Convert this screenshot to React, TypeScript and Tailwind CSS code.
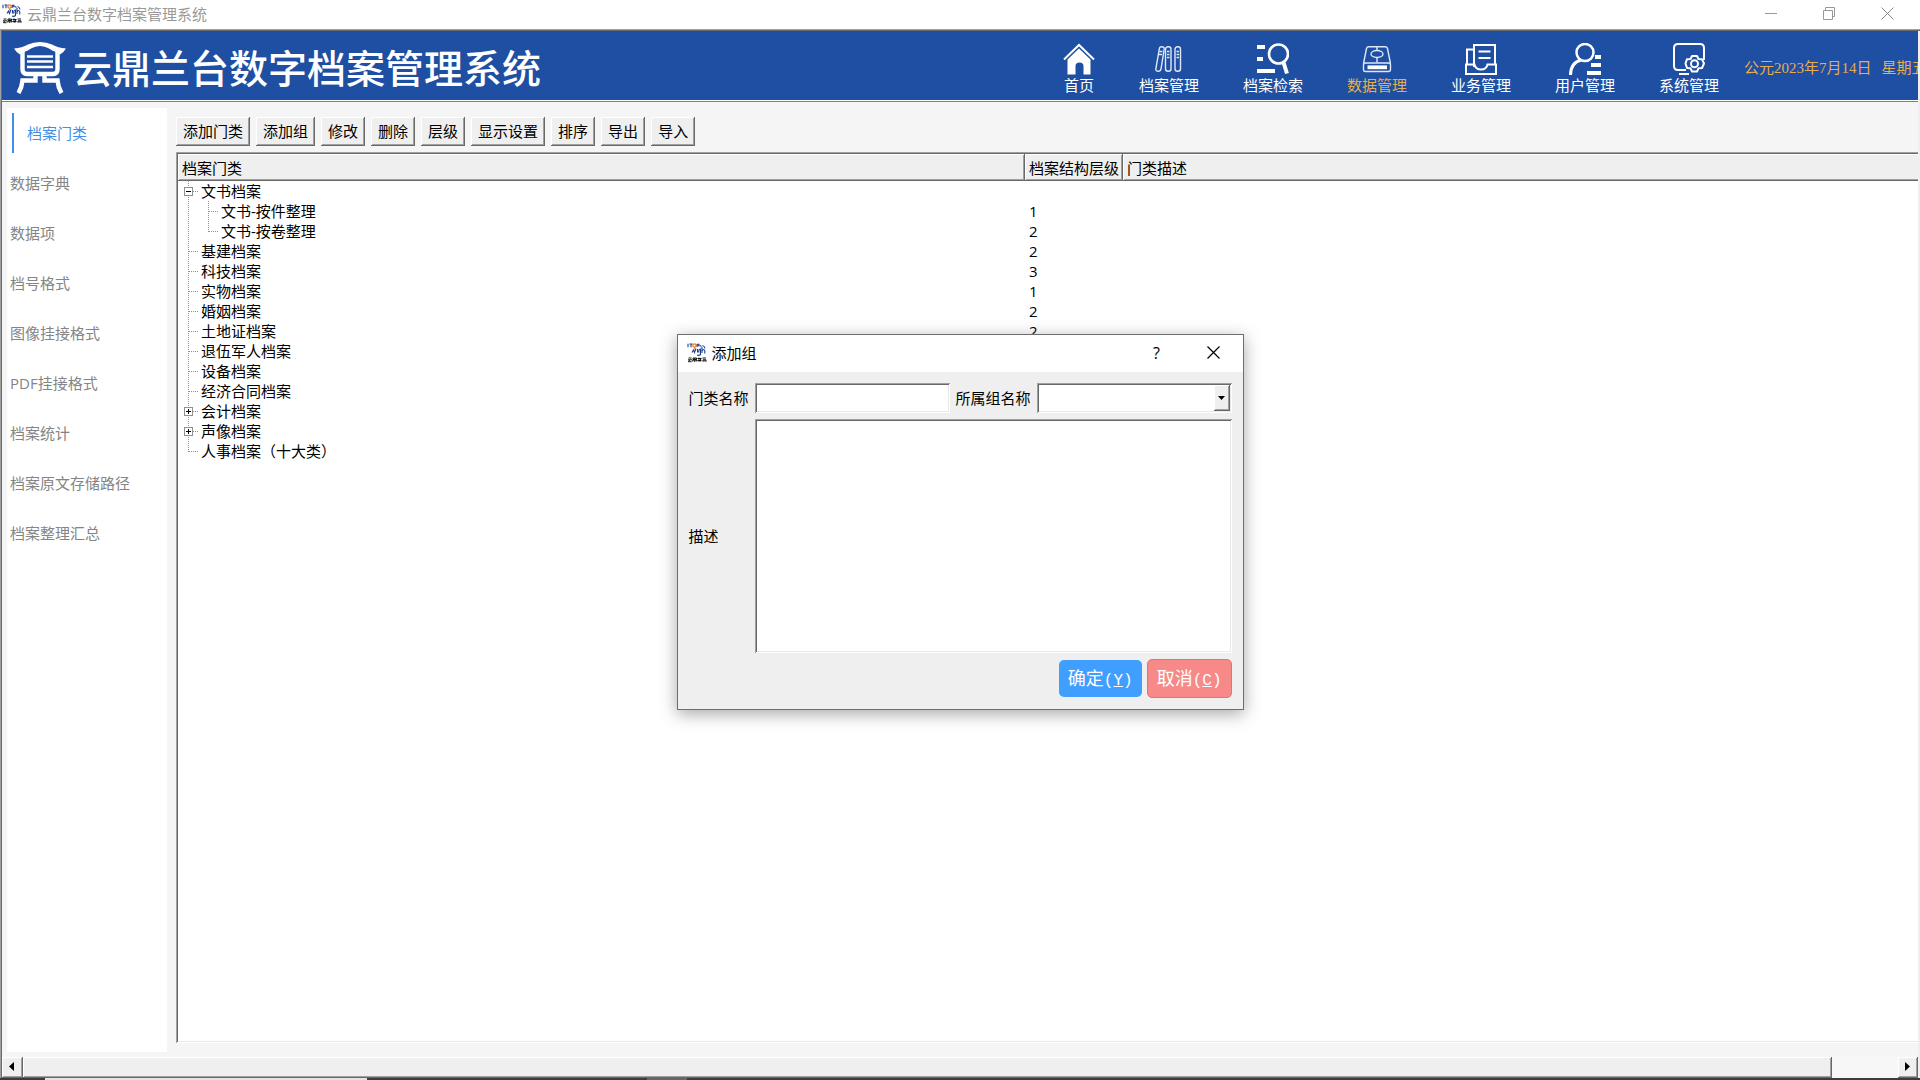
import React from 'react';

const SUNKEN = 'shadow-[inset_1px_1px_0_#a0a0a0,inset_-1px_-1px_0_#fff,inset_2px_2px_0_#696969,inset_-2px_-2px_0_#e9e9e9]';
const RAISED = 'shadow-[inset_-1px_-1px_0_#696969,inset_1px_1px_0_#fff,inset_-2px_-2px_0_#a0a0a0]';

interface TreeRow {
  name: string;
  level?: string;
  child?: boolean;
  last?: boolean;
  toggle?: 'plus' | 'minus';
}

const rows: TreeRow[] = [
  { name: '文书档案', toggle: 'minus' },
  { name: '文书-按件整理', level: '1', child: true },
  { name: '文书-按卷整理', level: '2', child: true, last: true },
  { name: '基建档案', level: '2' },
  { name: '科技档案', level: '3' },
  { name: '实物档案', level: '1' },
  { name: '婚姻档案', level: '2' },
  { name: '土地证档案', level: '2' },
  { name: '退伍军人档案' },
  { name: '设备档案' },
  { name: '经济合同档案' },
  { name: '会计档案', toggle: 'plus' },
  { name: '声像档案', toggle: 'plus' },
  { name: '人事档案（十大类）', last: true },
];

const sideItems = ['档案门类', '数据字典', '数据项', '档号格式', '图像挂接格式', 'PDF挂接格式', '档案统计', '档案原文存储路径', '档案整理汇总'];

const tools = ['添加门类', '添加组', '修改', '删除', '层级', '显示设置', '排序', '导出', '导入'];

const navItems = [
  { label: '首页', icon: <HomeIcon /> },
  { label: '档案管理', icon: <BooksIcon /> },
  { label: '档案检索', icon: <SearchIcon /> },
  { label: '数据管理', icon: <DriveIcon />, active: true },
  { label: '业务管理', icon: <InboxIcon /> },
  { label: '用户管理', icon: <UserIcon /> },
  { label: '系统管理', icon: <SystemIcon /> },
];

function AppMark() {
  return (
    <svg width="20" height="20" viewBox="0 0 20 20" aria-hidden="true">
      <g fill="none" stroke="#1d3f94" strokeWidth="1.1">
        <path d="M1 .8v3.500M2.500 1h3M4 1v3.300M10 1v3M10 1.200h2v1.500h-2M13 2.500l1.500 1" />
        <path d="M5 9.500l1.500-2.500 1 2.500 1.500-4M10.500 6v3.500M12 9.500q-1-3 1.500-3.500v5.500q-1.500 1.500-3.500.5M15 4v6M15.200 8q1.500-3 2.600 0v2.500M15.500 2.500q2 .5 2.500 3" />
      </g>
      <circle cx="7.500" cy="2.500" r="1.600" fill="none" stroke="#f07c28" strokeWidth="1.400" />
      <path d="M7.500 4.500v2" stroke="#f07c28" />
      <g fill="none" stroke="#111" strokeWidth="1">
        <path d="M1.500 15h3M1 16.800h4M2.500 17l-1 1.700h3" />
        <path d="M6 15h3.500v1.600H6zM5.800 18.500v-1.500h4v1.500M7.800 15v4" />
        <path d="M10.500 15.500h3.800M10.500 17.500h4M12 14.500v4M14 15l-1 3.700" />
        <path d="M15.500 15h3.500M16 16.800h3v2M16 16.800v2M16.500 17.800h2" />
      </g>
    </svg>
  );
}

function DingLogo() {
  return (
    <svg width="52" height="52" viewBox="0 0 52 52" fill="none" aria-hidden="true">
      <path d="M0 6.500Q8 6 14 2.500Q19 0 26 0Q33 0 38 2.500Q44 6 52 6.500Q50 10 46 12.500L42 10Q38 8.500 35 6.500Q31 4 26 4Q21 4 17 6.500Q14 8.500 10 10L6 12.500Q2 10 0 6.500Z" fill="#fff" />
      <g stroke="#fff" strokeWidth="4.400">
        <path d="M8.500 9V27Q8.500 32 13 32H39Q43.500 32 43.500 27V9" />
        <path d="M21.500 32V38.500H8.500Q8 45 4.500 51" />
        <path d="M30.500 32V38.500H43.500Q44 45 47.500 51" />
      </g>
      <path d="M13 14.500h26M13 19.500h26M13 25h26" stroke="#fff" strokeWidth="2.400" />
    </svg>
  );
}

function HomeIcon() {
  return (
    <svg width="32" height="32" viewBox="0 0 32 32" aria-hidden="true">
      <path d="M1 16.500L16 2L31 16.500" fill="none" stroke="#fff" strokeWidth="2" />
      <path d="M4.500 16.500L16 5.500L27.500 16.500V31.500H20.500V23Q20.500 19.500 16.500 19.500Q12.500 19.500 12.500 23V31.500H4.500Z" fill="#fff" />
    </svg>
  );
}

function BooksIcon() {
  return (
    <svg width="32" height="32" viewBox="0 0 32 32" fill="none" stroke="#dfe8f8" strokeWidth="1.400" aria-hidden="true">
      <path d="M6.500 5Q7 3.500 8.500 3.700L10.200 4Q11.500 4.300 11.200 6L8 26Q7.500 28.300 5.800 28.200L4 28Q2.500 27.500 2.800 26Z" />
      <rect x="12.500" y="3.700" width="5.500" height="24.500" rx="2.500" />
      <rect x="22" y="3.700" width="5.500" height="24.500" rx="2.500" />
      <path d="M6.500 8.500h3M6 11.500h3M14 8.500h2.500M14 11.500h2.500M14 14.500h2.500M23.500 8.500h2.500M23.500 11.500h2.500M23.500 14.500h2.500" />
    </svg>
  );
}

function SearchIcon() {
  return (
    <svg width="32" height="32" viewBox="0 0 32 32" fill="none" stroke="#fff" aria-hidden="true">
      <path d="M0 4h8M0 16h6M0 28h18" strokeWidth="4" />
      <circle cx="21.500" cy="11" r="9.500" strokeWidth="2.600" />
      <path d="M26.500 19.500L30 30.500" strokeWidth="4" />
    </svg>
  );
}

function DriveIcon() {
  return (
    <svg width="32" height="32" viewBox="0 0 32 32" fill="none" stroke="#dfe8f8" strokeWidth="1.400" aria-hidden="true">
      <path d="M2.500 20.500L5.500 5.500Q6 3.700 8 3.700H24Q26 3.700 26.500 5.500L29.500 20.500" />
      <rect x="2.500" y="20" width="27" height="8.500" rx="2" />
      <ellipse cx="16" cy="11" rx="6" ry="3.500" />
      <path d="M16 4v4M16 14.500v5" />
      <path d="M6.500 24.300h19.500" stroke="#fff" strokeWidth="3.800" />
    </svg>
  );
}

function InboxIcon() {
  return (
    <svg width="32" height="32" viewBox="0 0 32 32" fill="none" stroke="#fff" strokeWidth="2" aria-hidden="true">
      <path d="M9 24V2h21v19M9 6.500H2V21" />
      <path d="M1 21.500h8.500Q10.500 26.500 16 26.500Q21.500 26.500 22.500 21.500H31V31H1Z" />
      <path d="M13.500 8.500h12M13.500 15h12" />
    </svg>
  );
}

function UserIcon() {
  return (
    <svg width="32" height="32" viewBox="0 0 32 32" fill="none" stroke="#fff" aria-hidden="true">
      <circle cx="16" cy="9.500" r="8.500" strokeWidth="2.500" />
      <path d="M12 17Q1.500 20 1.500 32" strokeWidth="3" />
      <path d="M26 14h6M22 22h10M18 30h14" strokeWidth="4" />
    </svg>
  );
}

function SystemIcon() {
  return (
    <svg width="32" height="32" viewBox="0 0 32 32" fill="none" stroke="#fff" strokeWidth="2" aria-hidden="true">
      <path d="M13 27H5Q1 27 1 23V5Q1 1 5 1H27Q31 1 31 5V17M6 31h10" />
      <path d="M19 13h5l1.500 3 3.500.2 2 4.300-2 4.500-3.500.3-1.500 3.200h-5l-1.500-3.200-3.500-.3-1.500-4.500 1.500-4.300 3.500-.2Z" strokeLinejoin="round" />
      <circle cx="21.500" cy="20.800" r="3.500" />
    </svg>
  );
}

function TreeGuide({ row }: { row: TreeRow }) {
  const x = row.child ? 30 : 10;
  return (
    <svg width={row.child ? 43 : 23} height="20" fill="none" stroke="#909090" className="shrink-0" shapeRendering="crispEdges" aria-hidden="true">
      {row.child && <path d="M10.500 0v20" strokeDasharray="1 1" />}
      <path d={`M${x}.5 0v${row.last ? 11 : 20}M${x}.5 10.500h10`} strokeDasharray="1 1" />
      {row.toggle && <rect x="6.500" y="6.500" width="8" height="8" fill="#fff" />}
      {row.toggle && <path d={row.toggle === 'plus' ? 'M8 10.500h5M10.500 8v5' : 'M8 10.500h5'} stroke="#000" />}
    </svg>
  );
}

function Header() {
  return (
    <header className="flex h-[71px] shrink-0 items-center overflow-hidden border-b border-[#3f8ee8] bg-[#1f4fa2] pt-[3px] whitespace-nowrap text-white shadow-[inset_0_-1px_0_#fff]">
      <div className="flex shrink-0 items-center gap-[7px] pl-3">
        <DingLogo />
        <h1 className="text-[39px] leading-[48px] font-medium">云鼎兰台数字档案管理系统</h1>
      </div>
      <nav className="ml-auto flex shrink-0 gap-11 pt-0.5">
        {navItems.map(item => (
          <button key={item.label} className={`flex flex-col items-center text-[15px] leading-5 ${item.active ? 'text-[#e8ad4e]' : ''}`}>
            {item.icon}
            {item.label}
          </button>
        ))}
      </nav>
      <div className="ml-[25px] flex w-[174px] shrink-0 gap-2.5 overflow-hidden font-['Liberation_Serif','Noto_Sans_CJK_SC',serif] text-[15px] text-[#e8ad4e]">
        <span>公元2023年7月14日</span>
        <span>星期五</span>
      </div>
    </header>
  );
}

function Sidebar() {
  return (
    <aside className="flex w-40 shrink-0 flex-col gap-2.5 bg-white px-[3px] pt-[5px]">
      {sideItems.map((item, i) => (
        <button key={item} className={`h-10 text-left ${i === 0 ? 'ml-0.5 border-l-2 border-[#3f8ee8] pl-[13px] text-[#3f8ee8]' : 'text-[#858585]'}`}>{item}</button>
      ))}
    </aside>
  );
}

function CategoryTable() {
  const th = `h-[27px] bg-[#efefef] px-1 text-left font-normal ${RAISED}`;
  return (
    <div className="min-h-0 flex-1 overflow-hidden bg-white pt-0.5 pb-0.5 pl-0.5 shadow-[inset_1px_1px_0_#a0a0a0,inset_0_-1px_0_#fff,inset_2px_2px_0_#696969,inset_0_-2px_0_#e9e9e9]">
      <table className="w-full table-fixed border-collapse whitespace-nowrap">
        <thead>
          <tr>
            <th className={`w-[847px] ${th}`}>档案门类</th>
            <th className={`w-[98px] ${th}`}>档案结构层级</th>
            <th className="h-[27px] bg-[#efefef] px-1 text-left font-normal shadow-[inset_0_-1px_0_#696969,inset_1px_1px_0_#fff,inset_0_-2px_0_#a0a0a0]">门类描述</th>
          </tr>
        </thead>
        <tbody>
          {rows.map(row => (
            <tr key={row.name}>
              <td className="h-5 p-0"><div className="flex h-5"><TreeGuide row={row} />{row.name}</div></td>
              <td className="px-1 py-0">{row.level}</td>
              <td />
            </tr>
          ))}
        </tbody>
      </table>
    </div>
  );
}

function ScrollBar() {
  return (
    <div className="flex h-[21px] shrink-0 bg-[#f7f7f7]">
      <button aria-label="向左滚动" className={`flex w-[21px] items-center justify-center bg-[#efefef] pr-0.5 pb-0.5 ${RAISED}`}>
        <svg width="5" height="9"><path d="M5 0v9L0 4.500Z" /></svg>
      </button>
      <div className={`flex-1 bg-[#efefef] ${RAISED}`} />
      <div className="w-[66px]" />
      <button aria-label="向右滚动" className={`flex w-5 items-center justify-center bg-[#efefef] pr-0.5 pb-0.5 ${RAISED}`}>
        <svg width="5" height="9"><path d="M0 0v9l5-4.500Z" /></svg>
      </button>
    </div>
  );
}

function AddGroupDialog() {
  return (
    <div role="dialog" aria-labelledby="dialog-title" className="w-[567px] border border-[#6e6e6e] bg-[#efefef] shadow-[0_4px_16px_rgba(0,0,0,0.35)]">
      <div className="flex h-[37px] items-center bg-white pr-[22px] pb-0.5 pl-[9px]">
        <AppMark />
        <h2 id="dialog-title" className="ml-[5px] flex-1">添加组</h2>
        <button aria-label="帮助" className="mr-[41px] w-4 text-center text-base">?</button>
        <button aria-label="关闭" className="p-px">
          <svg width="13" height="13" stroke="#000" strokeWidth="1.200"><path d="M.5.5l12 12M12.500.5l-12 12" /></svg>
        </button>
      </div>
      <form className="flex flex-col gap-1.5 p-[11px]">
        <div className="flex items-center">
          <label htmlFor="name" className="w-[66px]">门类名称</label>
          <input id="name" className={`h-[30px] min-w-0 flex-1 bg-white indent-1 outline-none ${SUNKEN}`} />
          <label htmlFor="group" className="mx-1.5">所属组名称</label>
          <div className="relative flex min-w-0 flex-1">
            <select id="group" className={`h-[30px] w-full appearance-none bg-white px-1 outline-none ${SUNKEN}`}>
              <option value="" />
            </select>
            <span className={`pointer-events-none absolute inset-y-0.5 right-0.5 flex w-4 items-center justify-center bg-[#efefef] ${RAISED}`}>
              <svg width="7" height="4"><path d="M0 0h7L3.500 4Z" /></svg>
            </span>
          </div>
        </div>
        <div className="flex items-center">
          <label htmlFor="desc" className="w-[66px]">描述</label>
          <textarea id="desc" className={`h-[234px] flex-1 resize-none bg-white p-1 outline-none ${SUNKEN}`} />
        </div>
        <div className="flex items-center justify-end gap-[5px] text-lg text-white">
          <button type="button" className="h-[37px] rounded-[5px] bg-[#409eff] px-[9px]">确定<span className="font-['Liberation_Mono',monospace] text-base">(<u>Y</u>)</span></button>
          <button type="button" className="h-[39px] rounded-[5px] border border-[#f56c6c] bg-[#f78989] px-[9px]">取消<span className="font-['Liberation_Mono',monospace] text-base">(<u>C</u>)</span></button>
        </div>
      </form>
    </div>
  );
}

export default function App() {
  return (
    <div className="relative flex h-screen flex-col overflow-hidden bg-white font-['Open_Sans','Noto_Sans_CJK_SC',sans-serif] text-[15px] leading-5 text-black">
      <div className="flex h-[29px] shrink-0 items-center pr-[26px] pb-0.5 pl-0.5 text-[#999]">
        <AppMark />
        <span className="ml-[5px] flex-1">云鼎兰台数字档案管理系统</span>
        <div className="flex items-center gap-[46px]">
          <button aria-label="最小化"><svg width="12" height="13" stroke="#999"><path d="M0 6.500h12" /></svg></button>
          <button aria-label="还原"><svg width="12" height="13" fill="none" stroke="#999"><path d="M.5 3.500h9v9h-9zM2.500 3.500v-3h9v9h-2" /></svg></button>
          <button aria-label="关闭"><svg width="13" height="13" stroke="#888"><path d="M.5.5l12 12M12.500.5l-12 12" /></svg></button>
        </div>
      </div>

      <div className="flex min-h-0 flex-1 flex-col bg-[#f5f5f5] pt-0.5 pr-0.5 pl-0.5 shadow-[inset_1px_1px_0_#a0a0a0,inset_2px_2px_0_#696969,inset_-2px_0_0_#efefef]">
        <Header />
        <div className="flex min-h-0 flex-1 gap-[9px] pt-1.5 pb-[5px] pl-[5px]">
          <Sidebar />
          <main className="flex min-w-0 flex-1 flex-col gap-1.5 pt-[9px] pb-[9px]">
            <div className="flex gap-1.5">
              {tools.map(tool => <button key={tool} className={`h-[29px] bg-[#efefef] px-[7px] pb-0.5 ${RAISED}`}>{tool}</button>)}
            </div>
            <CategoryTable />
          </main>
        </div>
        <ScrollBar />
      </div>

      <div className="flex h-0.5 shrink-0 bg-[#3c3c3c]">
        <div className="ml-[45px] w-[322px] bg-[#e4e4e4]" />
        <div className="ml-[280px] w-10 bg-[#666]" />
      </div>

      <div className="absolute inset-0 flex items-center justify-center pb-9">
        <AddGroupDialog />
      </div>
    </div>
  );
}
